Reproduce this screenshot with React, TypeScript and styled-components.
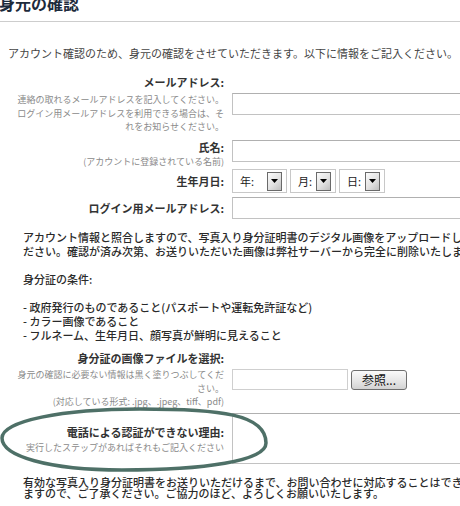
import styled, { createGlobalStyle } from 'styled-components';

const GlobalStyle = createGlobalStyle`
  html, body {
    margin: 0;
    padding: 0;
    background: #fff;
    overflow: hidden;
  }
  body {
    font-family: "Noto Sans CJK JP", "Noto Sans", sans-serif;
  }
`;

const Page = styled.div`
  position: relative;
  width: 460px;
  height: 506px;
  overflow: hidden;
  color: #333;
`;

const Header = styled.div`
  margin-top: -7px;
  padding-bottom: 8px;
  border-bottom: 1px solid #cdcdcd;
`;

const Title = styled.h2`
  margin: 0 0 0 -1px;
  font-size: 16px;
  line-height: 20px;
  font-weight: 700;
  color: #1d2b3c;
  white-space: nowrap;
`;

const Intro = styled.p`
  margin: 24px 0 0;
  padding-left: 8px;
  font-size: 11px;
  line-height: 14px;
  color: #454545;
  white-space: nowrap;
`;

interface RowProps {
  $top: number;
  $align?: 'start' | 'center';
}

const Row = styled.div<RowProps>`
  display: grid;
  grid-template-columns: 216px 250px;
  column-gap: 8px;
  align-items: ${(p) => p.$align ?? 'center'};
  margin-top: ${(p) => p.$top}px;
  padding-left: 8px;
`;

const LabelCell = styled.div<{ $padTop?: number }>`
  text-align: right;
  white-space: nowrap;
  padding-top: ${(p) => p.$padTop ?? 0}px;
`;

const FieldLabel = styled.label`
  display: block;
  font-size: 11px;
  line-height: 14px;
  font-weight: 700;
  color: #333;
`;

const Hint = styled.span<{ $gap: number }>`
  display: block;
  margin-top: ${(p) => p.$gap}px;
  font-size: 9px;
  line-height: 13.5px;
  color: #8a8a8a;
`;

const TextInput = styled.input`
  box-sizing: border-box;
  width: 100%;
  height: 22px;
  margin: 0;
  border: 1px solid #c2c2c2;
  border-top-color: #b0b0b0;
  background: #fff;
  outline: none;
`;

const DateGroup = styled.div`
  display: flex;
  gap: 3px;
`;

const DateBox = styled.div<{ $width: number }>`
  box-sizing: border-box;
  display: flex;
  align-items: center;
  justify-content: space-between;
  width: ${(p) => p.$width}px;
  height: 24px;
  padding: 0 4px 0 7px;
  border: 1px solid #c8c8c8;
  font-size: 11px;
  color: #1a1a1a;
`;

const Arrow = styled.span`
  box-sizing: border-box;
  display: flex;
  align-items: center;
  justify-content: center;
  width: 15px;
  height: 19px;
  border: 1px solid #6a6a6a;
  background: linear-gradient(135deg, #fbfbfb 0%, #e2e2e2 55%, #bfbfbf 100%);
`;

const FileGroup = styled.div`
  display: flex;
  align-items: center;
  gap: 3px;
`;

const FileBox = styled.div`
  box-sizing: border-box;
  width: 116px;
  height: 21px;
  border: 1px solid #cfcfcf;
  background: #fff;
`;

const BrowseButton = styled.button`
  box-sizing: border-box;
  width: 56px;
  height: 20px;
  padding: 0;
  border: 1px solid #6e6e6e;
  border-radius: 3px;
  background: linear-gradient(#fafafa, #e4e4e4 60%, #d2d2d2);
  font-family: inherit;
  font-size: 12px;
  line-height: 16px;
  color: #111;
`;

const TextArea = styled.textarea`
  box-sizing: border-box;
  display: block;
  width: 100%;
  height: 51px;
  margin: 0;
  border: 1px solid #c2c2c2;
  border-top-color: #b0b0b0;
  resize: none;
  outline: none;
`;

const Notice = styled.p<{ $top: number; $lineHeight: number }>`
  margin: ${(p) => p.$top}px 0 0;
  padding-left: 23px;
  font-size: 11px;
  line-height: ${(p) => p.$lineHeight}px;
  font-weight: 500;
  color: #2a2a2a;
  white-space: nowrap;
`;

const Annotation = styled.svg`
  position: absolute;
  left: 0;
  top: 400px;
  pointer-events: none;
`;

function DateSelect({ label, width }: { label: string; width: number }) {
  return (
    <DateBox $width={width}>
      <span>{label}</span>
      <Arrow>
        <svg width="7" height="4" viewBox="0 0 7 4">
          <path d="M0 0H7L3.5 4Z" fill="#000" />
        </svg>
      </Arrow>
    </DateBox>
  );
}

export default function App() {
  return (
    <>
      <GlobalStyle />
      <Page>
        <Header>
          <Title>身元の確認</Title>
        </Header>
        <Intro>
          アカウント確認のため、身元の確認をさせていただきます。以下に情報をご記入ください。
        </Intro>

        <Row $top={15}>
          <LabelCell>
            <FieldLabel htmlFor="email">メールアドレス:</FieldLabel>
            <Hint $gap={4}>
              連絡の取れるメールアドレスを記入してください。
              <br />
              ログイン用メールアドレスを利用できる場合は、そ
              <br />
              れをお知らせください。
            </Hint>
          </LabelCell>
          <TextInput id="email" type="text" />
        </Row>

        <Row $top={6} $align="start">
          <LabelCell>
            <FieldLabel htmlFor="name">氏名:</FieldLabel>
            <Hint $gap={1}>(アカウントに登録されている名前)</Hint>
          </LabelCell>
          <TextInput id="name" type="text" />
        </Row>

        <Row $top={1}>
          <LabelCell>
            <FieldLabel>生年月日:</FieldLabel>
          </LabelCell>
          <DateGroup>
            <DateSelect label="年:" width={55} />
            <DateSelect label="月:" width={46} />
            <DateSelect label="日:" width={46} />
          </DateGroup>
        </Row>

        <Row $top={4}>
          <LabelCell>
            <FieldLabel htmlFor="login">ログイン用メールアドレス:</FieldLabel>
          </LabelCell>
          <TextInput id="login" type="text" />
        </Row>

        <Notice $top={11} $lineHeight={14}>
          アカウント情報と照合しますので、写真入り身分証明書のデジタル画像をアップロードしてく
          <br />
          ださい。確認が済み次第、お送りいただいた画像は弊社サーバーから完全に削除いたします。
          <br />
          <br />
          身分証の条件:
          <br />
          <br />
          - 政府発行のものであること(パスポートや運転免許証など)
          <br />
          - カラー画像であること
          <br />
          - フルネーム、生年月日、顔写真が鮮明に見えること
        </Notice>

        <Row $top={9}>
          <LabelCell>
            <FieldLabel>身分証の画像ファイルを選択:</FieldLabel>
            <Hint $gap={3}>
              身元の確認に必要ない情報は黒く塗りつぶしてくだ
              <br />
              さい。
              <br />
              (対応している形式: .jpg、.jpeg、tiff、pdf)
            </Hint>
          </LabelCell>
          <FileGroup>
            <FileBox />
            <BrowseButton type="button">参照...</BrowseButton>
          </FileGroup>
        </Row>

        <Row $top={4}>
          <LabelCell $padTop={4}>
            <FieldLabel htmlFor="reason">電話による認証ができない理由:</FieldLabel>
            <Hint $gap={2}>実行したステップがあればそれもご記入ください</Hint>
          </LabelCell>
          <TextArea id="reason" />
        </Row>

        <Notice $top={13} $lineHeight={11.5}>
          有効な写真入り身分証明書をお送りいただけるまで、お問い合わせに対応することはできかね
          <br />
          ますので、ご了承ください。ご協力のほど、よろしくお願いいたします。
        </Notice>

        <Annotation width="272" height="80" viewBox="0 400 272 80">
          <path
            d="M 2 438 C 2 421, 62 409, 140 409 C 220 409, 266 414, 266 443 C 266 461, 204 470, 122 470 C 48 470, 2 456, 2 438 Z"
            fill="none"
            stroke="#4e7067"
            strokeWidth="3.5"
          />
        </Annotation>
      </Page>
    </>
  );
}
